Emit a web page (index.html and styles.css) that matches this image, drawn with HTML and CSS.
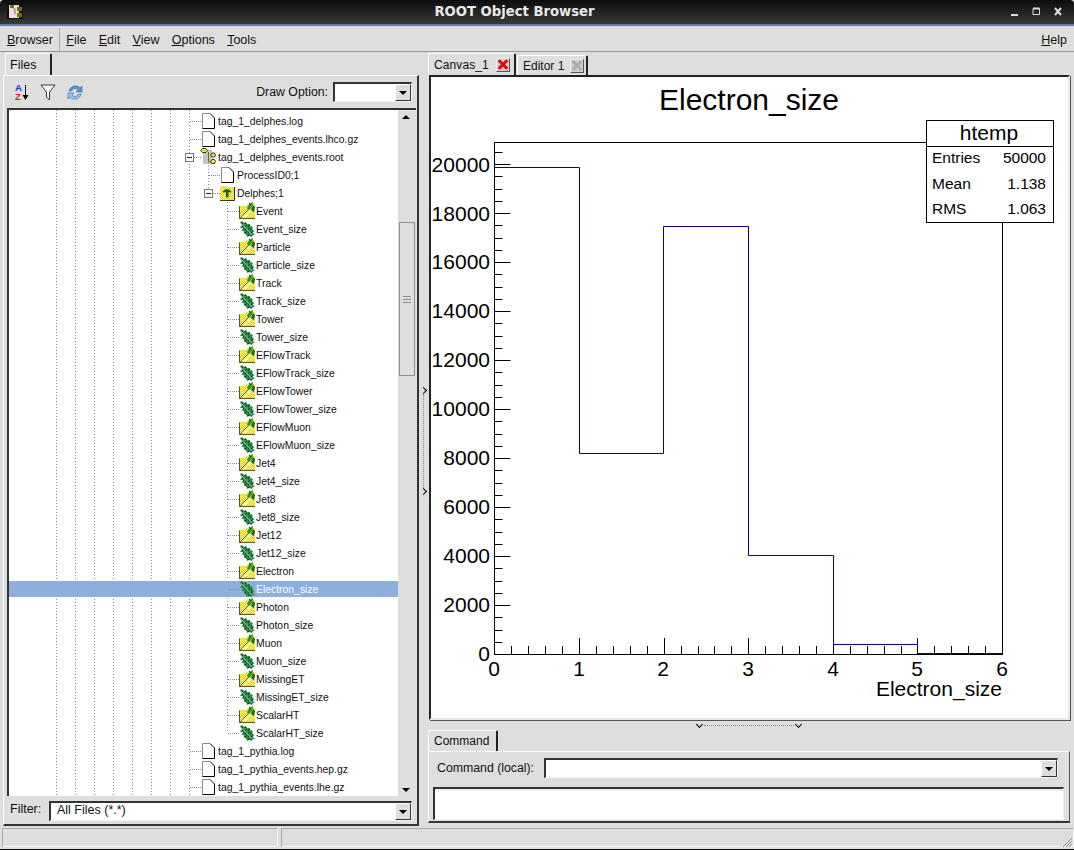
FILE: index.html
```html
<!DOCTYPE html>
<html lang="en">
<head>
  <meta charset="UTF-8">
  <title>ROOT Object Browser</title>
  <link rel="stylesheet" href="styles.css">
</head>
<body>
  <!-- shared tree icons -->
  <svg class="defs" width="0" height="0">
    <defs>
      <pattern id="dither" width="2" height="2" patternUnits="userSpaceOnUse">
        <rect width="2" height="2" fill="#fff68a"/>
        <rect width="1" height="1" fill="#e6d400"/>
        <rect x="1" y="1" width="1" height="1" fill="#e6d400"/>
      </pattern>
      <pattern id="leafy" width="3" height="3" patternUnits="userSpaceOnUse">
        <rect width="3" height="3" fill="#1f8a3a"/>
        <rect width="1" height="1" fill="#07331a"/>
        <rect x="2" y="1" width="1" height="1" fill="#3aa34a"/>
        <rect x="1" y="2" width="1" height="1" fill="#0d5a28"/>
      </pattern>
      <symbol id="i-file" viewBox="0 0 16 18">
        <path d="M2.500 1.500H10L14.500 6V16.500H2.500Z" fill="#fff"/>
        <path d="M2.500 16.500V1.500H10" fill="none" stroke="#8c8c8c"/>
        <path d="M10 1.500L14.500 6V16.500H2.500" fill="none" stroke="#000"/>
      </symbol>
      <symbol id="i-root" viewBox="0 0 16 18">
        <rect x="3" y="2" width="9" height="14" fill="#c4c4c4"/>
        <path d="M8.500 4V14H11" fill="none" stroke="#6b6b20"/>
        <path d="M0.500 2.500L2.500 0.500H6L7.500 2.500L6 4.500H2.500Z" fill="#f2e33a" stroke="#333"/>
        <path d="M10.500 7L12 5H14.500L15.500 7L14.500 9H12Z" fill="#f2e33a" stroke="#333"/>
        <path d="M10.500 13.500L12 11.500H14.500L15.500 13.500L14.500 15.500H12Z" fill="#f2e33a" stroke="#333"/>
      </symbol>
      <symbol id="i-dir" viewBox="0 0 16 18">
        <path d="M1 16V2H6L7 3H15V16Z" fill="url(#dither)"/>
        <path d="M1 16.500H15.500V3" fill="none" stroke="#333"/>
        <path d="M4 8C5 5 11 5 12 8L9 7.500V13H7.500V7.500Z" fill="#0a7a12" stroke="#053"/>
      </symbol>
      <symbol id="i-branch" viewBox="0 0 16 18">
        <path d="M0 17V4H7L9 2H16V17Z" fill="#eede2a"/>
        <path d="M0 17V4H7L9 2H16V17Z" fill="url(#dither)"/>
        <path d="M4 15L11 8L12 9L6 15Z" fill="#fffdd8"/>
        <path d="M0.500 17V4.500M0 16.500H16M1 16L11 6" stroke="#5a5a20"/>
        <path d="M8 7C8 4 11 1 14 0C14 3 13 6 10 8Z" fill="#2f9a25"/>
        <path d="M12 8L14 3L16 5L15 10Z" fill="#146a22"/>
        <path d="M10 1L12 3" stroke="#0a4a1a"/>
      </symbol>
      <symbol id="i-leaf" viewBox="0 0 16 18">
        <path d="M1 2L3 1L5 3L7 2L8 4L11 4L11 6L14 7L13 9L15 11L14 13L16 15L13 15L13 17L10 16L8 17L7 14L5 14L5 11L3 11L4 8L1 8L3 5Z" fill="url(#leafy)"/>
        <path d="M3 4L14 16" stroke="#7fa3ad" stroke-width="1.300"/>
      </symbol>
    </defs>
  </svg>

  <div class="window">
    <header class="titlebar">
      <svg class="app-icon" width="16" height="16" viewBox="0 0 16 16">
        <rect width="16" height="16" fill="#111"/>
        <rect x="2" y="2" width="10" height="13" fill="#e8e2d8"/>
        <path d="M5 4L8 6V11" fill="none" stroke="#c0504d"/>
        <rect x="10" y="4" width="5" height="4" fill="#6e6e1e"/>
        <rect x="10" y="10" width="5" height="4" fill="#6e6e1e"/>
        <rect x="3" y="2" width="4" height="3" fill="#6e6e1e"/>
      </svg>
      <span class="title-text">ROOT Object Browser</span>
      <svg class="win-btns" width="54" height="12" viewBox="0 0 54 12">
        <path d="M0 10H7" stroke="#ddd" stroke-width="2"/>
        <path d="M22 3.500H28.500V9.500H22Z" fill="none" stroke="#ddd"/>
        <path d="M22 3.500H28.500" stroke="#ddd" stroke-width="2"/>
        <path d="M44 3L50 10M50 3L44 10" stroke="#ddd" stroke-width="2"/>
      </svg>
    </header>

    <nav class="menubar">
      <span class="menu-item browser-menu"><u>B</u>rowser</span>
      <span class="menu-item"><u>F</u>ile</span>
      <span class="menu-item"><u>E</u>dit</span>
      <span class="menu-item"><u>V</u>iew</span>
      <span class="menu-item"><u>O</u>ptions</span>
      <span class="menu-item"><u>T</u>ools</span>
      <span class="menu-item help-menu"><u>H</u>elp</span>
    </nav>

    <main class="workspace">
      <section class="left-side">
        <div class="tabs"><div class="tab files-tab">Files</div></div>
        <div class="left-panel">
          <div class="toolbar">
            <svg class="tool sort-tool" width="18" height="20" viewBox="0 0 18 20">
              <text x="1" y="9" class="az-a">A</text>
              <text x="1" y="18" class="az-z">Z</text>
              <path d="M11.500 3V15" stroke="#000"/>
              <path d="M8.500 13H14.500L11.500 18Z" fill="#000"/>
            </svg>
            <svg class="tool filter-tool" width="16" height="18" viewBox="0 0 16 18">
              <path d="M1 2H15L9.500 9V17L6.500 14V9Z" fill="#fff" stroke="#333"/>
            </svg>
            <svg class="tool" width="16" height="17" viewBox="0 0 16 17">
              <path d="M2 7C3 2 10 0 13 4L15 2V8H9L11 6C9 4 6 4 4.500 7Z" fill="#5b93d0" stroke="#2e6cae" stroke-width=".6"/>
              <path d="M14 10C13 15 6 17 3 13L1 15V9H7L5 11C7 13 10 13 11.500 10Z" fill="#9cc2e8" stroke="#2e6cae" stroke-width=".6"/>
            </svg>
            <span class="draw-label">Draw Option:</span>
            <div class="combo draw-combo"><span class="combo-text"></span><span class="combo-btn"></span></div>
          </div>

          <div class="tree-frame">
            <div class="tree">
              <div class="row d0"><svg class="ico"><use href="#i-file"/></svg><span>tag_1_delphes.log</span></div>
              <div class="row d0"><svg class="ico"><use href="#i-file"/></svg><span>tag_1_delphes_events.lhco.gz</span></div>
              <div class="row d0 down"><i class="exp"></i><svg class="ico"><use href="#i-root"/></svg><span>tag_1_delphes_events.root</span></div>
              <div class="row d1 g1"><svg class="ico"><use href="#i-file"/></svg><span>ProcessID0;1</span></div>
              <div class="row d1 g1-end"><i class="exp"></i><svg class="ico"><use href="#i-dir"/></svg><span>Delphes;1</span></div>
              <div class="row d2"><svg class="ico"><use href="#i-branch"/></svg><span>Event</span></div>
              <div class="row d2"><svg class="ico"><use href="#i-leaf"/></svg><span>Event_size</span></div>
              <div class="row d2"><svg class="ico"><use href="#i-branch"/></svg><span>Particle</span></div>
              <div class="row d2"><svg class="ico"><use href="#i-leaf"/></svg><span>Particle_size</span></div>
              <div class="row d2"><svg class="ico"><use href="#i-branch"/></svg><span>Track</span></div>
              <div class="row d2"><svg class="ico"><use href="#i-leaf"/></svg><span>Track_size</span></div>
              <div class="row d2"><svg class="ico"><use href="#i-branch"/></svg><span>Tower</span></div>
              <div class="row d2"><svg class="ico"><use href="#i-leaf"/></svg><span>Tower_size</span></div>
              <div class="row d2"><svg class="ico"><use href="#i-branch"/></svg><span>EFlowTrack</span></div>
              <div class="row d2"><svg class="ico"><use href="#i-leaf"/></svg><span>EFlowTrack_size</span></div>
              <div class="row d2"><svg class="ico"><use href="#i-branch"/></svg><span>EFlowTower</span></div>
              <div class="row d2"><svg class="ico"><use href="#i-leaf"/></svg><span>EFlowTower_size</span></div>
              <div class="row d2"><svg class="ico"><use href="#i-branch"/></svg><span>EFlowMuon</span></div>
              <div class="row d2"><svg class="ico"><use href="#i-leaf"/></svg><span>EFlowMuon_size</span></div>
              <div class="row d2"><svg class="ico"><use href="#i-branch"/></svg><span>Jet4</span></div>
              <div class="row d2"><svg class="ico"><use href="#i-leaf"/></svg><span>Jet4_size</span></div>
              <div class="row d2"><svg class="ico"><use href="#i-branch"/></svg><span>Jet8</span></div>
              <div class="row d2"><svg class="ico"><use href="#i-leaf"/></svg><span>Jet8_size</span></div>
              <div class="row d2"><svg class="ico"><use href="#i-branch"/></svg><span>Jet12</span></div>
              <div class="row d2"><svg class="ico"><use href="#i-leaf"/></svg><span>Jet12_size</span></div>
              <div class="row d2"><svg class="ico"><use href="#i-branch"/></svg><span>Electron</span></div>
              <div class="row d2 selected"><svg class="ico"><use href="#i-leaf"/></svg><span>Electron_size</span></div>
              <div class="row d2"><svg class="ico"><use href="#i-branch"/></svg><span>Photon</span></div>
              <div class="row d2"><svg class="ico"><use href="#i-leaf"/></svg><span>Photon_size</span></div>
              <div class="row d2"><svg class="ico"><use href="#i-branch"/></svg><span>Muon</span></div>
              <div class="row d2"><svg class="ico"><use href="#i-leaf"/></svg><span>Muon_size</span></div>
              <div class="row d2"><svg class="ico"><use href="#i-branch"/></svg><span>MissingET</span></div>
              <div class="row d2"><svg class="ico"><use href="#i-leaf"/></svg><span>MissingET_size</span></div>
              <div class="row d2"><svg class="ico"><use href="#i-branch"/></svg><span>ScalarHT</span></div>
              <div class="row d2 last"><svg class="ico"><use href="#i-leaf"/></svg><span>ScalarHT_size</span></div>
              <div class="row d0"><svg class="ico"><use href="#i-file"/></svg><span>tag_1_pythia.log</span></div>
              <div class="row d0"><svg class="ico"><use href="#i-file"/></svg><span>tag_1_pythia_events.hep.gz</span></div>
              <div class="row d0"><svg class="ico"><use href="#i-file"/></svg><span>tag_1_pythia_events.lhe.gz</span></div>
            </div>
            <div class="scrollbar">
              <span class="arrow-up"></span>
              <div class="thumb"><i></i></div>
              <span class="arrow-down"></span>
            </div>
          </div>

          <div class="filter-row">
            <span class="filter-label">Filter:</span>
            <div class="combo filter-combo"><span class="combo-text">All Files (*.*)</span><span class="combo-btn"></span></div>
          </div>
        </div>
      </section>

      <div class="v-splitter"><b class="chev-r"></b><i></i><b class="chev-r"></b></div>

      <section class="right-side">
        <div class="tabs">
          <div class="tab canvas-tab">Canvas_1<span class="tab-close on"></span></div>
          <div class="tab editor-tab">Editor 1<span class="tab-close"></span></div>
        </div>
        <div class="canvas-frame">
          <svg class="plot" width="638" height="641" viewBox="431 78 638 641">
            <text x="749" y="110" text-anchor="middle" class="plot-title">Electron_size</text>
            <rect x="494.500" y="142.500" width="508" height="512" fill="none" stroke="#000"/>
            <path class="ticks" d="M494.500 164.500h16M494.500 213.500h16M494.500 262.500h16M494.500 311.500h16M494.500 360.500h16M494.500 409.500h16M494.500 458.500h16M494.500 507.500h16M494.500 556.500h16M494.500 605.500h16
              M494.500 152.500h8M494.500 176.500h8M494.500 189.500h8M494.500 201.500h8M494.500 225.500h8M494.500 238.500h8M494.500 250.500h8M494.500 274.500h8M494.500 287.500h8M494.500 299.500h8M494.500 323.500h8M494.500 336.500h8M494.500 348.500h8M494.500 372.500h8M494.500 385.500h8M494.500 397.500h8M494.500 421.500h8M494.500 434.500h8M494.500 446.500h8M494.500 470.500h8M494.500 483.500h8M494.500 495.500h8M494.500 519.500h8M494.500 532.500h8M494.500 544.500h8M494.500 568.500h8M494.500 581.500h8M494.500 593.500h8M494.500 617.500h8M494.500 630.500h8M494.500 642.500h8
              M579.500 654v-16M664.500 654v-16M748.500 654v-16M833.500 654v-16M917.500 654v-16
              M511.500 654v-8M528.500 654v-8M545.500 654v-8M562.500 654v-8M596.500 654v-8M613.500 654v-8M630.500 654v-8M647.500 654v-8M681.500 654v-8M698.500 654v-8M714.500 654v-8M731.500 654v-8M765.500 654v-8M782.500 654v-8M799.500 654v-8M816.500 654v-8M850.500 654v-8M867.500 654v-8M884.500 654v-8M901.500 654v-8M934.500 654v-8M951.500 654v-8M968.500 654v-8M985.500 654v-8"/>
            <path class="hist" d="M494.500 167.500H579.500V453.500H663.500V226.500H748.500V555.500H833.500V644.500H917.500V653.500H1002.500"/>
            <g class="axis-y">
              <text x="490" y="172">20000</text><text x="490" y="221">18000</text><text x="490" y="269">16000</text>
              <text x="490" y="318">14000</text><text x="490" y="367">12000</text><text x="490" y="416">10000</text>
              <text x="490" y="465">8000</text><text x="490" y="514">6000</text><text x="490" y="563">4000</text>
              <text x="490" y="612">2000</text><text x="490" y="661">0</text>
            </g>
            <g class="axis-x">
              <text x="494" y="676">0</text><text x="579" y="676">1</text><text x="663" y="676">2</text><text x="748" y="676">3</text>
              <text x="833" y="676">4</text><text x="917" y="676">5</text><text x="1002" y="676">6</text>
            </g>
            <text x="1002" y="696" text-anchor="end" class="axis-name">Electron_size</text>
            <rect x="926.500" y="120.500" width="127" height="102" fill="#fff" stroke="#000"/>
            <path d="M926.500 146.500H1053.500" stroke="#000"/>
            <text x="989" y="140" text-anchor="middle" class="stats-title">htemp</text>
            <g class="stats">
              <text x="932" y="163">Entries</text><text x="1046" y="163" text-anchor="end">50000</text>
              <text x="932" y="189">Mean</text><text x="1046" y="189" text-anchor="end">1.138</text>
              <text x="932" y="214">RMS</text><text x="1046" y="214" text-anchor="end">1.063</text>
            </g>
          </svg>
        </div>
        <div class="h-splitter"><b class="chev-d"></b><i></i><b class="chev-d"></b></div>
        <div class="tabs command-tabs"><div class="tab command-tab">Command</div></div>
        <div class="command-panel">
          <div class="command-row">
            <span class="command-label">Command (local):</span>
            <div class="combo command-combo"><span class="combo-text"></span><span class="combo-btn"></span></div>
          </div>
          <div class="output"></div>
        </div>
      </section>
    </main>

    <footer class="statusbar">
      <div class="status-cell first"></div>
      <div class="status-cell"></div>
      <svg class="grip" width="12" height="12" viewBox="0 0 12 12">
        <path d="M11 2L2 11M11 5L5 11M11 8L8 11" stroke="#8a8a8a"/>
      </svg>
    </footer>
  </div>
</body>
</html>
```

FILE: styles.css
```css
* {
  box-sizing: border-box;
}

html, body {
  margin: 0;
  height: 100%;
}

body {
  background: #000;
  font-family: "Liberation Sans", Arial, sans-serif;
  font-size: 12px;
  color: #111;
  overflow: hidden;
}

.defs {
  display: block;
  height: 0;
}

.window {
  width: 1074px;
  height: 850px;
  display: flex;
  flex-direction: column;
  background: #dedede;
  border-bottom: 1px solid #111;
}

/* title bar */
.titlebar {
  height: 26px;
  flex: none;
  display: flex;
  align-items: center;
  padding: 0 9px 2px 7px;
  background: linear-gradient(#0c0c0c, #3a3a3a);
  border-bottom: 2px solid #5a7ba6;
  border-radius: 4px 4px 0 0;
}

.title-text {
  flex: 1;
  text-align: center;
  color: #e8e8e8;
  font-family: "DejaVu Sans", sans-serif;
  font-weight: bold;
  font-size: 13.200px;
  margin-left: -5px;
}

/* menu bar */
.menubar {
  height: 26px;
  flex: none;
  display: flex;
  align-items: center;
  gap: 12.300px;
  padding: 2px 7px 0;
  border-bottom: 1px solid #9a9a9a;
  font-size: 12.500px;
}

.browser-menu {
  align-self: stretch;
  display: flex;
  align-items: center;
  white-space: pre;
  width: 53px;
  margin-right: -6px;
  border-right: 1px solid #a8a8a8;
}

.browser-menu u {
  display: inline-block;
}

.help-menu {
  margin-left: auto;
}

/* panels */
.workspace {
  flex: 1;
  display: flex;
  min-height: 0;
}

.left-side {
  width: 419px;
  padding-left: 3px;
  display: flex;
  flex-direction: column;
}

.tabs {
  height: 23px;
  flex: none;
  display: flex;
  align-items: flex-end;
  padding-left: 2px;
}

.tab {
  height: 22px;
  padding: 0 6px;
  display: flex;
  align-items: center;
  background: #dedede;
  border-top: 1px solid #fff;
  border-left: 1px solid #fff;
  border-right: 2px solid #222;
  border-radius: 2px 2px 0 0;
  font-size: 12px;
}

.files-tab {
  width: 47px;
  padding-left: 4px;
  font-size: 12.500px;
}

.left-panel {
  flex: 1;
  display: flex;
  flex-direction: column;
  padding: 0 1px 0 3px;
  border-top: 1px solid #fff;
  border-left: 1px solid #fff;
  border-right: 2px solid #333;
  border-bottom: 2px solid #333;
  margin-bottom: 1px;
}

.toolbar {
  height: 32px;
  flex: none;
  display: flex;
  align-items: center;
  padding-left: 7px;
}

.tool {
  margin-right: 11px;
}

.sort-tool {
  margin-right: 8px;
}

.az-a, .az-z {
  font-family: "Liberation Sans", sans-serif;
  font-size: 9.500px;
  font-weight: bold;
}

.az-a {
  fill: #1f2ee0;
}

.az-z {
  fill: #e01a1a;
}

.draw-label {
  margin-left: auto;
  margin-right: 5px;
  font-size: 12.300px;
}

/* combo boxes */
.combo {
  height: 20px;
  display: flex;
  background: #fff;
  border-top: 2px solid #333;
  border-left: 2px solid #333;
  border-right: 1px solid #f4f4f4;
  border-bottom: 1px solid #f4f4f4;
}

.combo-text {
  flex: 1;
  padding-left: 6px;
  line-height: 15px;
  font-size: 12.500px;
}

.combo-btn {
  width: 16px;
  background: #dedede;
  border-left: 1px solid #fff;
  border-top: 1px solid #fff;
  border-right: 1px solid #333;
  border-bottom: 1px solid #333;
  display: flex;
  align-items: center;
  justify-content: center;
}

.combo-btn::before {
  content: "";
  border-top: 4px solid #000;
  border-left: 4px solid transparent;
  border-right: 4px solid transparent;
}

.draw-combo {
  width: 79px;
  margin-right: 4px;
}

/* tree */
.tree-frame {
  flex: 1;
  min-height: 0;
  display: flex;
  border-top: 2px solid #333;
  border-left: 2px solid #333;
}

.tree {
  flex: 1;
  min-width: 0;
  padding-top: 2px;
  overflow: hidden;
  background-color: #fff;
  background-image:
    linear-gradient(#8a8a8a 1px, transparent 1px), linear-gradient(#8a8a8a 1px, transparent 1px),
    linear-gradient(#8a8a8a 1px, transparent 1px), linear-gradient(#8a8a8a 1px, transparent 1px),
    linear-gradient(#8a8a8a 1px, transparent 1px), linear-gradient(#8a8a8a 1px, transparent 1px),
    linear-gradient(#8a8a8a 1px, transparent 1px), linear-gradient(#8a8a8a 1px, transparent 1px);
  background-size: 1px 3px;
  background-repeat: repeat-y;
  background-position: 47px 0, 66px 0, 85px 0, 104px 0, 123px 0, 142px 0, 161px 0, 180px 0;
}

.row {
  position: relative;
  height: 18px;
  display: flex;
  align-items: center;
  white-space: nowrap;
  font-size: 10.400px;
}

.row::before {
  content: "";
  width: 11px;
  height: 1px;
  flex: none;
  background-image: linear-gradient(to right, #8a8a8a 1px, transparent 1px);
  background-size: 2px 1px;
}

.ico {
  width: 16px;
  height: 18px;
  flex: none;
  margin-right: 1px;
}

.d0 {
  padding-left: 181px;
}

.d0 .ico {
  margin-left: -1px;
  margin-right: 2px;
}

.d1 {
  padding-left: 200px;
}

.d1 .ico {
  margin-left: -1px;
  margin-right: 2px;
}

.d2 {
  padding-left: 219px;
  background-image: linear-gradient(#8a8a8a 1px, transparent 1px);
  background-size: 1px 3px;
  background-repeat: repeat-y;
  background-position: 218px 0;
}

.g1, .g1-end {
  background-image: linear-gradient(#8a8a8a 1px, transparent 1px);
  background-size: 1px 3px;
  background-repeat: repeat-y;
  background-position: 199px 0;
}

.g1-end {
  background-repeat: no-repeat;
  background-image:
    linear-gradient(#8a8a8a 1px, transparent 1px),
    linear-gradient(#8a8a8a 1px, transparent 1px),
    linear-gradient(#8a8a8a 1px, transparent 1px);
  background-position: 199px 0, 199px 3px, 199px 6px;
}

.d2.last {
  background-repeat: no-repeat;
  background-image:
    linear-gradient(#8a8a8a 1px, transparent 1px),
    linear-gradient(#8a8a8a 1px, transparent 1px),
    linear-gradient(#8a8a8a 1px, transparent 1px);
  background-position: 218px 0, 218px 3px, 218px 6px;
}

.row.selected {
  background: linear-gradient(#8cafdc, #8cafdc) 0 1px / 100% 16px no-repeat, #fff;
  color: #fff;
}

.exp {
  position: absolute;
  top: 5px;
  left: 176px;
  width: 9px;
  height: 9px;
  background: #fff linear-gradient(#222, #222) center / 5px 1px no-repeat;
  border: 1px solid #777;
}

.d1 .exp {
  left: 195px;
}

.scrollbar {
  width: 18px;
  flex: none;
  position: relative;
  background: #dedede;
  display: flex;
  flex-direction: column;
  align-items: center;
}

.arrow-up, .arrow-down {
  position: absolute;
  left: 4px;
  border-left: 4px solid transparent;
  border-right: 4px solid transparent;
}

.arrow-up {
  top: 5px;
  border-bottom: 4px solid #000;
}

.arrow-down {
  bottom: 4px;
  border-top: 4px solid #000;
}

.thumb {
  width: 16px;
  height: 154px;
  margin-top: 112px;
  display: flex;
  align-items: center;
  justify-content: center;
  border: 1px solid #8f8f8f;
}

.thumb i {
  width: 8px;
  height: 7px;
  border-top: 1px solid #8f8f8f;
  border-bottom: 1px solid #8f8f8f;
  background: linear-gradient(#8f8f8f, #8f8f8f) center / 100% 1px no-repeat;
}

.filter-row {
  height: 28px;
  flex: none;
  display: flex;
  align-items: flex-start;
  padding: 5px 0 0 3px;
}

.filter-label {
  width: 39px;
  line-height: 17px;
  font-size: 12.500px;
}

.filter-combo {
  flex: 1;
  margin-right: 4px;
}

/* splitters */
.v-splitter {
  width: 8px;
  flex: none;
  display: flex;
  flex-direction: column;
  align-items: center;
  padding-top: 335px;
}

.v-splitter i {
  height: 94px;
  border-left: 1px dotted #888;
}

.chev-r {
  width: 5px;
  height: 5px;
  margin: 1px 0;
  border-top: 1px solid #000;
  border-right: 1px solid #000;
  transform: rotate(45deg);
}

.right-side {
  flex: 1;
  min-width: 0;
  display: flex;
  flex-direction: column;
  padding-right: 4px;
}

.canvas-tab {
  width: 88px;
  margin-left: -1px;
  padding: 0 0 0 5px;
  gap: 7px;
  height: 22px;
  letter-spacing: 0.1px;
}

.editor-tab {
  width: 71px;
  height: 20px;
  padding: 0 0 0 5px;
  gap: 6px;
  margin-left: 1px;
}

.tab-close {
  width: 14px;
  height: 14px;
  position: relative;
  background: #cfcfcf;
  border: 1px solid #999;
  border-color: #eee #555 #555 #eee;
}

.tab-close::before, .tab-close::after {
  content: "";
  position: absolute;
  left: 0;
  top: 4px;
  width: 12px;
  height: 3px;
  background: #aaa;
  transform: rotate(45deg);
}

.tab-close::after {
  transform: rotate(-45deg);
}

.tab-close.on::before, .tab-close.on::after {
  background: #e00000;
}

.canvas-frame {
  height: 645px;
  flex: none;
  margin-left: 2px;
  padding: 1px 0 0 0;
  background: #fff;
  border-top: 2px solid #222;
  border-left: 2px solid #222;
  border-right: 2px solid #e8e8e8;
  border-bottom: 2px solid #e8e8e8;
  box-shadow: 1px 1px 0 #555;
}

.plot {
  display: block;
}

.plot-title {
  font-size: 30px;
}

.ticks {
  fill: none;
  stroke: #000;
}

.hist {
  fill: none;
  stroke: #000099;
}

.axis-y text, .axis-x text {
  font-size: 21px;
}

.axis-y text {
  text-anchor: end;
}

.axis-x text {
  text-anchor: middle;
}

.axis-name {
  font-size: 21px;
}

.stats-title {
  font-size: 21px;
}

.stats text {
  font-size: 15.500px;
}

.h-splitter {
  height: 10px;
  flex: none;
  display: flex;
  align-items: center;
  justify-content: center;
}

.h-splitter i {
  width: 90px;
  border-top: 1px dotted #888;
}

.chev-d {
  width: 5px;
  height: 5px;
  margin: -2px 2px 0;
  border-right: 1px solid #000;
  border-bottom: 1px solid #000;
  transform: rotate(45deg);
}

.command-tabs {
  height: 21px;
  padding-left: 1px;
}

.command-tab {
  width: 70px;
  height: 21px;
  padding-left: 5px;
}

.command-panel {
  height: 72px;
  flex: none;
  margin-left: 1px;
  padding: 6px 5px 0 4px;
  border-top: 1px solid #fff;
  border-left: 1px solid #fff;
  border-right: 1px solid #555;
  border-bottom: 2px solid #333;
}

.command-row {
  display: flex;
  align-items: center;
  padding-left: 4px;
}

.command-label {
  width: 107px;
  font-size: 12.300px;
}

.command-combo {
  flex: 1;
  margin-right: 6px;
}

.output {
  height: 33px;
  margin-top: 9px;
  background: #fff;
  border-top: 2px solid #333;
  border-left: 2px solid #333;
  border-right: 1px solid #eee;
  border-bottom: 1px solid #eee;
  box-shadow: inset 0 2px 0 #eee;
}

/* status bar */
.statusbar {
  height: 23px;
  flex: none;
  display: flex;
  padding: 2px 0 2px 2px;
  position: relative;
}

.status-cell {
  flex: 1;
  border-top: 1px solid #aaa;
  border-left: 1px solid #aaa;
  border-right: 1px solid #f6f6f6;
  border-bottom: 1px solid #f6f6f6;
}

.status-cell.first {
  flex: none;
  width: 276px;
  margin-right: 3px;
}

.grip {
  position: absolute;
  right: 1px;
  bottom: 1px;
}
```
